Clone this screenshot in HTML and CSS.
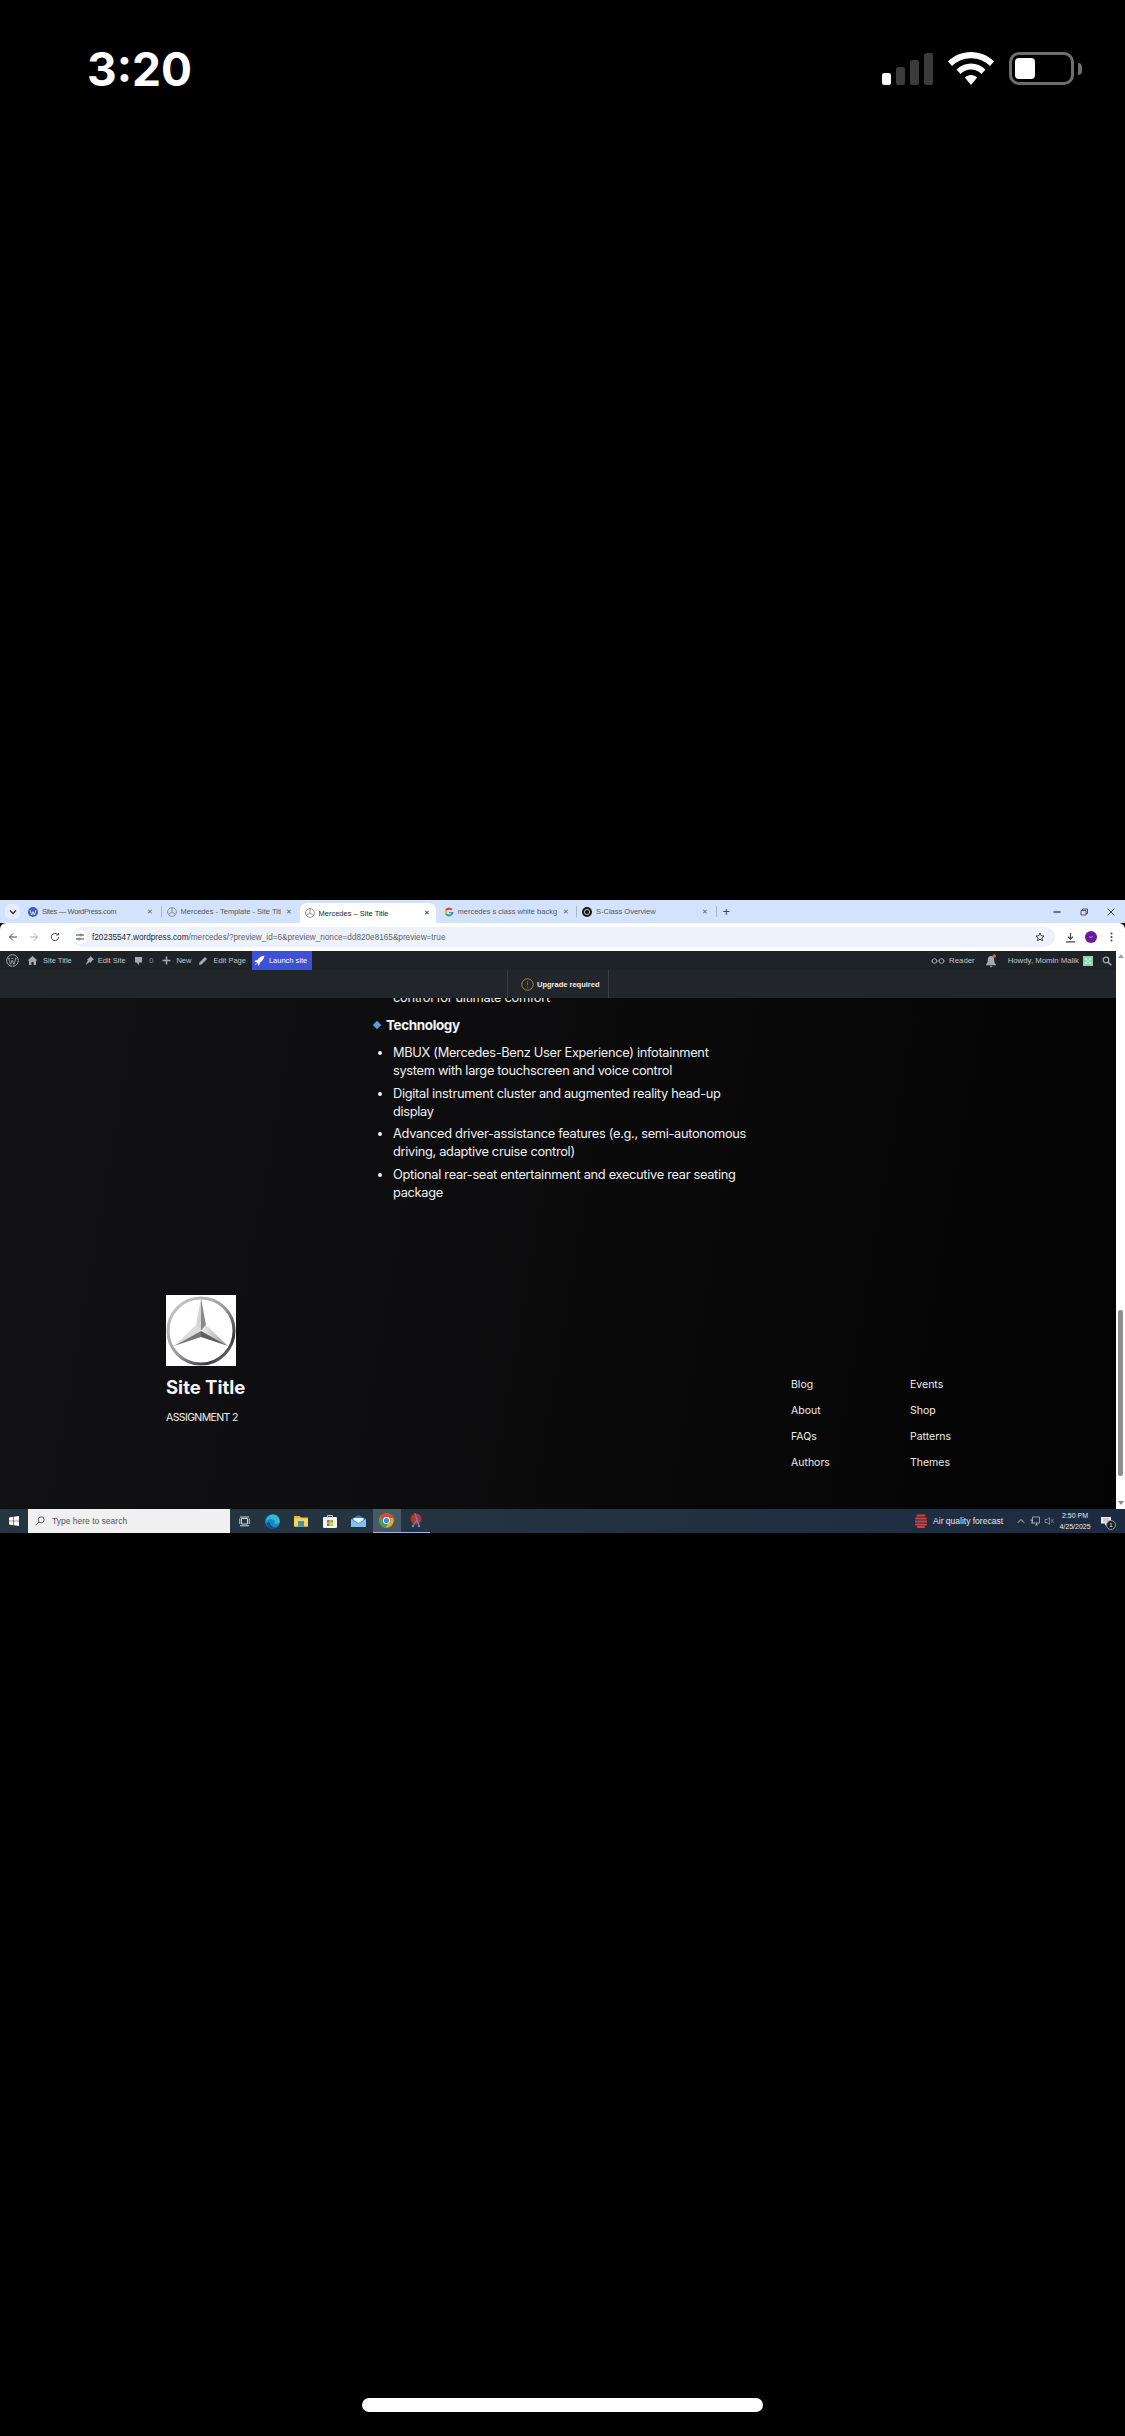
FILE: index.html
```html
<!DOCTYPE html>
<html lang="en">
<head>
  <meta charset="UTF-8" />
  <title>Mercedes – Site Title</title>
  <link rel="stylesheet" href="styles.css">
</head>
<body>
  <!-- phone status bar -->
  <div class="status">
    <div class="clock">3:20</div>
    <div class="status-icons">
      <div class="signal">
        <span class="bar b1 on"></span><span class="bar b2"></span><span class="bar b3"></span><span class="bar b4"></span>
      </div>
      <svg class="wifi" width="46" height="33" viewBox="0 0 46 33">
        <path d="M23 0C14 0 6 3.500 0 9.500L4 14C9 9 15.500 6.200 23 6.200S37 9 42 14L46 9.500C40 3.500 32 0 23 0Z" fill="#fff"/>
        <path d="M23 11.500C17.500 11.500 12.500 13.700 8.500 17.500L12.500 22C15.500 19.200 19 17.600 23 17.600S30.500 19.200 33.500 22L37.500 17.500C33.500 13.700 28.500 11.500 23 11.500Z" fill="#fff"/>
        <path d="M23 23C20.500 23 18.500 24 16.800 25.500L23 33L29.200 25.500C27.500 24 25.500 23 23 23Z" fill="#fff"/>
      </svg>
      <div class="battery"><div class="battery-fill"></div></div>
      <div class="battery-nub"></div>
    </div>
  </div>

  <!-- the desktop screenshot -->
  <div class="screen">
    <div class="tabstrip">
      <div class="tab-menu">
        <svg width="8" height="6" viewBox="0 0 8 6"><path d="M1 1.500L4 4.500L7 1.500" fill="none" stroke="#333" stroke-width="1.300"/></svg>
      </div>
      <div class="tab t1">
        <svg class="fav" width="10" height="10" viewBox="0 0 10 10"><circle cx="5" cy="5" r="5" fill="#3f5cc4"/><path d="M2 3L3.800 8L5 4.500L6.300 8L8 3" fill="none" stroke="#dfe6ff" stroke-width=".9"/></svg>
        <span class="tab-title">Sites — WordPress.com</span><span class="tab-x">✕</span>
      </div>
      <div class="tab-sep"></div>
      <div class="tab t2">
        <svg class="fav" width="10" height="10" viewBox="0 0 10 10"><circle cx="5" cy="5" r="4.400" fill="none" stroke="#777" stroke-width=".8"/><path d="M5 .8V5L1.500 7.300M5 5L8.500 7.300" fill="none" stroke="#777" stroke-width=".8"/></svg>
        <span class="tab-title">Mercedes - Template - Site Title</span><span class="tab-x">✕</span>
      </div>
      <div class="tab t3 active">
        <svg class="fav" width="10" height="10" viewBox="0 0 10 10"><circle cx="5" cy="5" r="4.400" fill="none" stroke="#777" stroke-width=".8"/><path d="M5 .8V5L1.500 7.300M5 5L8.500 7.300" fill="none" stroke="#777" stroke-width=".8"/></svg>
        <span class="tab-title">Mercedes – Site Title</span><span class="tab-x">✕</span>
      </div>
      <div class="tab t4">
        <svg class="fav" width="10" height="10" viewBox="0 0 10 10"><path d="M8.600 2.200A4.500 4.500 0 0 0 1.100 2.800L2.800 4A2.500 2.500 0 0 1 7 3.600Z" fill="#ea4335"/><path d="M1.100 2.800A4.500 4.500 0 0 0 1.200 7.300L2.800 6A2.500 2.500 0 0 1 2.800 4Z" fill="#fbbc05"/><path d="M1.200 7.300A4.500 4.500 0 0 0 8.300 8L6.800 6.800A2.500 2.500 0 0 1 2.800 6Z" fill="#34a853"/><path d="M9.500 5H5V6.200H7.500L6.800 6.800L8.300 8A4.500 4.500 0 0 0 9.500 5Z" fill="#4285f4"/></svg>
        <span class="tab-title">mercedes s class white backgro</span><span class="tab-x">✕</span>
      </div>
      <div class="tab-sep"></div>
      <div class="tab t5">
        <svg class="fav" width="10" height="10" viewBox="0 0 10 10"><circle cx="5" cy="5" r="5" fill="#1a1a1a"/><circle cx="5" cy="5" r="2.600" fill="none" stroke="#ccc" stroke-width=".9"/></svg>
        <span class="tab-title">S-Class Overview</span><span class="tab-x">✕</span>
      </div>
      <div class="tab-sep"></div>
      <div class="tab-new">+</div>
      <div class="win-controls">
        <svg width="10" height="10" viewBox="0 0 10 10"><path d="M1.500 5H8.500" stroke="#222" stroke-width="1.200"/></svg>
        <svg width="10" height="10" viewBox="0 0 10 10"><path d="M2 3.500H7V8H2ZM3.500 3.500V2H8.500V6.500H7" fill="none" stroke="#333" stroke-width=".8"/></svg>
        <svg width="10" height="10" viewBox="0 0 10 10"><path d="M1.500 1.500L8.500 8.500M8.500 1.500L1.500 8.500" stroke="#333" stroke-width=".9"/></svg>
      </div>
    </div>

    <div class="toolbar">
      <div class="nav-icons">
        <svg width="10" height="10" viewBox="0 0 10 10"><path d="M9 5H1.500M5 1.500L1.500 5L5 8.500" fill="none" stroke="#444" stroke-width="1"/></svg>
        <svg width="10" height="10" viewBox="0 0 10 10"><path d="M1 5H8.500M5 1.500L8.500 5L5 8.500" fill="none" stroke="#aaa" stroke-width="1"/></svg>
        <svg width="10" height="10" viewBox="0 0 10 10"><path d="M8.500 5A3.600 3.600 0 1 1 7.400 2.400M8.500 .8V3H6.300" fill="none" stroke="#444" stroke-width="1"/></svg>
      </div>
      <div class="omnibox">
        <div class="site-info">
          <svg width="8" height="8" viewBox="0 0 8 8"><path d="M0 2H4M6 2H8M0 6H2M4 6H8" stroke="#333" stroke-width=".9"/><circle cx="5" cy="2" r="1" fill="none" stroke="#333" stroke-width=".7"/><circle cx="3" cy="6" r="1" fill="none" stroke="#333" stroke-width=".7"/></svg>
        </div>
        <span class="url"><b>f20235547.wordpress.com</b>/mercedes/?preview_id=6&amp;preview_nonce=dd820e8165&amp;preview=true</span>
        <svg class="star" width="10" height="10" viewBox="0 0 10 10"><path d="M5 1L6.200 3.700L9 4L6.900 5.900L7.500 8.800L5 7.300L2.500 8.800L3.100 5.900L1 4L3.800 3.700Z" fill="none" stroke="#333" stroke-width=".9"/></svg>
      </div>
      <div class="tool-icons">
        <svg width="11" height="11" viewBox="0 0 11 11"><path d="M5.500 1V7M3 4.800L5.500 7.200L8 4.800M1 9.800H10" fill="none" stroke="#444" stroke-width="1.200"/></svg>
        <svg class="profile" width="12" height="12" viewBox="0 0 12 12"><circle cx="6" cy="6" r="6" fill="#6a1b9a"/><path d="M4 5.500Q6 7.500 8 5.500" fill="none" stroke="#c9a3e0" stroke-width=".8"/></svg>
        <svg class="dots" width="3" height="10" viewBox="0 0 3 10"><circle cx="1.500" cy="1.500" r="1" fill="#444"/><circle cx="1.500" cy="5" r="1" fill="#444"/><circle cx="1.500" cy="8.500" r="1" fill="#444"/></svg>
      </div>
    </div>

    <div class="viewport">
      <div class="site">
        <div class="adminbar">
          <div class="admin-left">
            <svg class="wp-logo" width="13" height="13" viewBox="0 0 13 13"><circle cx="6.500" cy="6.500" r="5.800" fill="none" stroke="#a7aaad" stroke-width="1"/><path d="M2.600 4.400L4.600 10.400L6.200 6L7.900 10.400L9.900 4.400M2 4.300H4.200M5.400 4.300H7.400M8.900 4.300H10.500" fill="none" stroke="#a7aaad" stroke-width=".9"/></svg>
            <div class="admin-item home">
              <svg width="11" height="11" viewBox="0 0 11 11"><path d="M5.500 1L.5 5.600H2V10H4.400V7H6.600V10H9V5.600H10.500Z" fill="#a7aaad"/></svg>
              <span>Site Title</span>
            </div>
            <div class="admin-item edit-site">
              <svg width="11" height="11" viewBox="0 0 11 11"><path d="M6.500 1L10 4.500L8.800 5L6.400 8L5.800 7L1.500 10L4 5.200L3 4.600L6 2.200Z" fill="#a7aaad"/></svg>
              <span>Edit Site</span>
            </div>
            <div class="admin-item comments">
              <svg width="9" height="10" viewBox="0 0 9 10"><path d="M1 1H8V6.500H5V9.500L2.800 6.500H1Z" fill="#a7aaad"/></svg>
              <span class="count">0</span>
            </div>
            <div class="admin-item new">
              <svg width="9" height="9" viewBox="0 0 9 9"><path d="M4.500 .5V8.500M.5 4.500H8.500" stroke="#a7aaad" stroke-width="1.500"/></svg>
              <span>New</span>
            </div>
            <div class="admin-item edit-page">
              <svg width="10" height="10" viewBox="0 0 10 10"><path d="M7 1L9 3L3.500 8.500L1 9L1.500 6.500Z" fill="#a7aaad"/></svg>
              <span>Edit Page</span>
            </div>
            <div class="launch">
              <svg width="11" height="11" viewBox="0 0 11 11"><path d="M10.500 .5C7.500 .8 5 2.400 3.400 5L1 5.600L.5 7L2.500 7.200L3.800 8.500L4 10.500L5.400 10L6 7.600C8.600 6 10.200 3.500 10.500 .5ZM2 8.200L.5 10.500L2.800 9Z" fill="#fff"/></svg>
              <span>Launch site</span>
            </div>
          </div>
          <div class="admin-right">
            <div class="admin-item reader">
              <svg width="14" height="6" viewBox="0 0 14 6"><circle cx="3.500" cy="3" r="2.300" fill="none" stroke="#c3c4c7" stroke-width=".8"/><circle cx="10.500" cy="3" r="2.300" fill="none" stroke="#c3c4c7" stroke-width=".8"/><path d="M5.800 3H8.200M1.200 3H0M12.800 3H14" stroke="#c3c4c7" stroke-width=".6"/></svg>
              <span>Reader</span>
            </div>
            <div class="bell">
              <svg width="12" height="14" viewBox="0 0 12 14"><path d="M6 2C3.800 2 2.800 3.600 2.800 5.500C2.800 8 2.300 9.200 1 10.400V11.200H11V10.400C9.700 9.200 9.200 8 9.200 5.500C9.200 3.600 8.200 2 6 2ZM4.500 12H7.500L6 13.500Z" fill="#a7aaad"/><circle cx="9.300" cy="2" r="1.800" fill="#d9605a"/></svg>
            </div>
            <span class="howdy">Howdy, Momin Malik</span>
            <svg class="gravatar" width="10" height="10" viewBox="0 0 10 10"><rect width="10" height="10" fill="#8fd3b0"/><path d="M2 2H4V4H2ZM6 2H8V4H6ZM4 4H6V6H4ZM2 6H4V8H2ZM6 6H8V8H6Z" fill="#c5ecd8"/></svg>
            <svg class="admin-search" width="10" height="10" viewBox="0 0 10 10"><circle cx="4" cy="4" r="2.800" fill="none" stroke="#a7aaad" stroke-width="1.300"/><path d="M6 6L9.300 9.300" stroke="#a7aaad" stroke-width="1.600"/></svg>
          </div>
        </div>
        <div class="upgrade-bar">
          <div class="upgrade">
            <svg width="13" height="13" viewBox="0 0 13 13"><circle cx="6.500" cy="6.500" r="5.700" fill="none" stroke="#b5842f" stroke-width="1"/><path d="M6.500 3.300V7.300M6.500 8.500V9.700" stroke="#77603a" stroke-width="1.100"/></svg>
            <span>Upgrade required</span>
          </div>
        </div>

        <div class="page">
          <div class="article">
            <p class="cut-line">control for ultimate comfort</p>
            <h3 class="section-title"><span class="diamond"></span>Technology</h3>
            <ul class="specs">
              <li>MBUX (Mercedes-Benz User Experience) infotainment system with large touchscreen and voice control</li>
              <li>Digital instrument cluster and augmented reality head-up display</li>
              <li>Advanced driver-assistance features (e.g., semi-autonomous driving, adaptive cruise control)</li>
              <li>Optional rear-seat entertainment and executive rear seating package</li>
            </ul>
          </div>
          <div class="footer">
            <div class="brand">
              <svg class="logo" width="70" height="71" viewBox="0 0 70 71">
                <defs>
                  <linearGradient id="ring" x1="0" y1="0" x2="1" y2="1">
                    <stop offset="0" stop-color="#cfcfcf"/><stop offset=".5" stop-color="#9a9a9a"/><stop offset=".8" stop-color="#3a3a3a"/><stop offset="1" stop-color="#a8a8a8"/>
                  </linearGradient>
                  <linearGradient id="blade" x1="0" y1="0" x2="1" y2="0">
                    <stop offset="0" stop-color="#f0f0f0"/><stop offset="1" stop-color="#9a9a9a"/>
                  </linearGradient>
                </defs>
                <rect width="70" height="71" fill="#fff"/>
                <circle cx="35" cy="36" r="33" fill="none" stroke="url(#ring)" stroke-width="3"/>
                <path d="M35 3L30 30L35 36Z" fill="#d4d4d4"/>
                <path d="M35 3L40 30L35 36Z" fill="#8a8a8a"/>
                <path d="M35 36L30 30L8 51Z" fill="#dcdcdc"/>
                <path d="M35 36L35 42L8 51Z" fill="#777"/>
                <path d="M35 36L40 30L62 51Z" fill="url(#blade)"/>
                <path d="M35 36L35 42L62 51Z" fill="#5f5f5f"/>
              </svg>
              <div class="brand-name">Site Title</div>
              <div class="brand-tag">ASSIGNMENT 2</div>
            </div>
            <div class="foot-nav">
              <div class="foot-col">
                <a>Blog</a><a>About</a><a>FAQs</a><a>Authors</a>
              </div>
              <div class="foot-col">
                <a>Events</a><a>Shop</a><a>Patterns</a><a>Themes</a>
              </div>
            </div>
          </div>
        </div>
      </div>
      <div class="scrollbar">
        <span class="arrow up"></span>
        <div class="thumb"></div>
        <span class="arrow down"></span>
      </div>
    </div>

    <div class="taskbar">
      <svg class="win-logo" width="10" height="10" viewBox="0 0 10 10"><path d="M0 1.400L4.300 .8V4.700H0ZM4.900 .7L10 0V4.700H4.900ZM0 5.300H4.300V9.200L0 8.600ZM4.900 5.300H10V10L4.900 9.300Z" fill="#fff"/></svg>
      <div class="searchbox">
        <svg width="10" height="10" viewBox="0 0 10 10"><circle cx="6.200" cy="3.800" r="3" fill="none" stroke="#333" stroke-width=".8"/><path d="M4 6L.8 9.200" stroke="#333" stroke-width=".9"/></svg>
        <span>Type here to search</span>
      </div>
      <div class="task-icons">
        <div class="task-icon">
          <svg width="11" height="11" viewBox="0 0 11 11"><path d="M2.500 2.500H8.500V8H2.500ZM1 1H10M1 9.800H10M.8 2.500V8M10.200 2.500V8" fill="none" stroke="#e6e6e6" stroke-width=".9"/></svg>
        </div>
        <div class="task-icon">
          <svg width="15" height="15" viewBox="0 0 15 15"><circle cx="7.500" cy="7.500" r="7.300" fill="#1687c9"/><path d="M.5 8C1.500 3 5 .5 8.500.5C12 .5 14.800 3.500 14.800 8C14.800 9.500 13 10 10.800 10C9 10 9.500 8 10 7.500C9 5 5 4 2.500 6C1.500 6.800 1 7.500.5 8Z" fill="#35b8c8"/><path d="M5 8.500C5 12 8.500 14 11.500 13.500C8 15.800 3 14.500 1.500 10.500C2 8.500 4 7 5 8.500Z" fill="#0c4f8f"/></svg>
        </div>
        <div class="task-icon">
          <svg width="14" height="12" viewBox="0 0 14 12"><path d="M0 1H5.500L7 2.500H14V11.500H0Z" fill="#e8b83f"/><rect y="3.500" width="14" height="8" fill="#f6d365"/><rect x="4" y="6" width="6" height="5.500" fill="#3f8fc8"/></svg>
        </div>
        <div class="task-icon">
          <svg width="14" height="14" viewBox="0 0 14 14"><rect y="3" width="14" height="11" rx="1" fill="#f4f4f4"/><path d="M4.500 4V1.500H9.500V4" fill="none" stroke="#cfcfcf" stroke-width="1"/><rect x="4" y="6" width="2.700" height="2.700" fill="#e2552b"/><rect x="7.300" y="6" width="2.700" height="2.700" fill="#7cb82f"/><rect x="4" y="9.300" width="2.700" height="2.700" fill="#1f9bd7"/><rect x="7.300" y="9.300" width="2.700" height="2.700" fill="#f3b51c"/></svg>
        </div>
        <div class="task-icon">
          <svg width="15" height="12" viewBox="0 0 15 12"><path d="M7.500 0L15 4V12H0V4Z" fill="#2d7fc4"/><path d="M0 4.200L7.500 8.500L15 4.200V12H0Z" fill="#7fc4ec"/><path d="M2.500 3H12.500V5L7.500 8L2.500 5Z" fill="#f2f6fa"/></svg>
        </div>
        <div class="task-icon open current">
          <svg width="15" height="15" viewBox="0 0 15 15"><circle cx="7.500" cy="7.500" r="7.300" fill="#e5a52b"/><path d="M7.500.2A7.300 7.300 0 0 0 1.100 4L4 9L5 5H14.300A7.300 7.300 0 0 0 7.500.2Z" fill="#d8473b"/><path d="M1.100 4A7.300 7.300 0 0 0 6.500 14.700L9.300 10H5Z" fill="#3ba55c"/><circle cx="7.500" cy="7.500" r="3.400" fill="#fff"/><circle cx="7.500" cy="7.500" r="2.600" fill="#4287e8"/></svg>
        </div>
        <div class="task-icon open">
          <svg width="13" height="15" viewBox="0 0 13 15"><circle cx="7" cy="6" r="5.500" fill="#b3352b"/><path d="M6 0L8 7L4 13M8 7L10 13" fill="none" stroke="#5b8bc9" stroke-width="1.200"/><circle cx="4" cy="13" r="1.300" fill="#5b8bc9"/><circle cx="10" cy="13" r="1.300" fill="#5b8bc9"/></svg>
        </div>
      </div>
      <div class="tray">
        <svg class="air" width="12" height="14" viewBox="0 0 12 14"><path d="M2.500 1.500H9.500M1 4.500H11M.5 7.500H11.500M1 10.500H11M3 13H9" fill="none" stroke="#d1433a" stroke-width="2" stroke-linecap="round"/></svg>
        <span class="air-text">Air quality forecast</span>
        <svg class="caret" width="8" height="6" viewBox="0 0 8 6"><path d="M.8 4.800L4 1.500L7.200 4.800" fill="none" stroke="#ddd" stroke-width=".9"/></svg>
        <svg class="net" width="10" height="10" viewBox="0 0 10 10"><path d="M2.500 1H9.500V7H2.500ZM5 9H8M6.500 7V9M0 4H2V8" fill="none" stroke="#ccc" stroke-width=".7"/></svg>
        <svg class="vol" width="10" height="10" viewBox="0 0 10 10"><path d="M1 3.500H3L5.500 1.500V8.500L3 6.500H1Z" fill="none" stroke="#aaa" stroke-width=".7"/><path d="M7 3L9.500 7M9.500 3L7 7" stroke="#999" stroke-width=".6"/></svg>
        <div class="clock-small"><span>2:50 PM</span><span>4/25/2025</span></div>
        <div class="notify">
          <svg width="10" height="9" viewBox="0 0 10 9"><path d="M0 0H10V6.500H6L4 9V6.500H0Z" fill="#eee"/><path d="M2 2H8M2 4H8" stroke="#777" stroke-width=".6"/></svg>
          <span class="notify-count">1</span>
        </div>
      </div>
    </div>
  </div>

  <div class="home-bar"><div class="home-pill"></div></div>
</body>
</html>
```

FILE: styles.css
```css
* {
  box-sizing: border-box;
}
html, body {
  margin: 0;
  height: 2436px;
  background-color: #000000;
}
body {
  font-family: Inter, "Liberation Sans", sans-serif;
  display: flex;
  flex-direction: column;
  overflow: hidden;
}

/* phone chrome */
.status {
  height: 900px;
  display: flex;
  justify-content: space-between;
  align-items: flex-start;
  padding: 46px 43px 0 87px;
}
.clock {
  color: #ffffff;
  font-size: 46px;
  line-height: 46px;
  font-weight: 700;
}
.status-icons {
  display: flex;
  align-items: center;
  margin-top: 6px;
}
.signal {
  display: flex;
  align-items: flex-end;
  gap: 5px;
  height: 33px;
  margin-right: 15px;
}
.bar {
  width: 9px;
  border-radius: 2.500px;
  background-color: #3b3b3b;
}
.bar.on { background-color: #ffffff; }
.b1 { height: 12px; }
.b2 { height: 18px; }
.b3 { height: 25px; }
.b4 { height: 32px; }
.battery {
  width: 65px;
  height: 33px;
  margin-left: 15px;
  padding: 3px;
  border: 3px solid #6e6e6e;
  border-radius: 10px;
}
.battery-fill {
  width: 20px;
  height: 100%;
  border-radius: 4px;
  background-color: #ffffff;
}
.battery-nub {
  width: 4px;
  height: 12px;
  margin-left: 4px;
  border-radius: 0 6px 6px 0;
  background-color: #6e6e6e;
}
.home-bar {
  flex: 1;
  display: flex;
  justify-content: center;
  align-items: flex-end;
  padding-bottom: 24px;
}
.home-pill {
  width: 401px;
  height: 14px;
  border-radius: 7px;
  background-color: #ffffff;
}

/* screenshot */
.screen {
  height: 633px;
  display: flex;
  flex-direction: column;
}
.tabstrip {
  height: 23px;
  display: flex;
  align-items: center;
  background-color: #d3e3fd;
  font-family: "Liberation Sans", sans-serif;
  font-size: 7.500px;
  color: #55585a;
}
.tab-menu {
  width: 15px;
  height: 15px;
  margin: 0 4px 0 5px;
  border-radius: 5px;
  display: flex;
  align-items: center;
  justify-content: center;
  background-color: #e6eefc;
}
.tab {
  height: 23px;
  flex: none;
  display: flex;
  align-items: center;
  padding: 0 6px 0 5px;
  gap: 4px;
}
.tab-title {
  flex: 1;
  white-space: nowrap;
  overflow: hidden;
}
.tab-x {
  font-size: 7px;
  width: 9px;
  text-align: center;
}
.fav { flex: none; }
.t1 { width: 136.500px; padding-left: 4px; }
.t1 .tab-title { letter-spacing: -0.35px; }
.t2 { width: 138px; }
.t3 { width: 136px; padding-right: 4.500px; }
.t4 { width: 140.500px; padding-left: 8px; }
.t5 { width: 138.500px; }
.active {
  background-color: #ffffff;
  color: #1f1f1f;
  border-radius: 7px 7px 0 0;
  margin-top: 3px;
  height: 20px;
}
.tab-sep {
  width: 1px;
  height: 11px;
  background-color: #a9b6cc;
}
.tab-new {
  font-size: 13px;
  margin-left: 6px;
  color: #444746;
}
.win-controls {
  margin-left: auto;
  padding-right: 9px;
  display: flex;
  gap: 17px;
}
.toolbar {
  height: 28px;
  display: flex;
  align-items: center;
  background-color: #ffffff;
  border-radius: 6px 6px 0 0;
}
.nav-icons {
  width: 72px;
  padding-left: 8px;
  display: flex;
  gap: 11px;
}
.omnibox {
  width: 983px;
  height: 20px;
  display: flex;
  align-items: center;
  border-radius: 10px;
  padding: 0 10px 0 1px;
  background-color: #edf2fa;
  font-family: "Liberation Sans", sans-serif;
  font-size: 8.200px;
  color: #5f6368;
}
.site-info {
  width: 14px;
  height: 14px;
  margin-right: 5px;
  border-radius: 50%;
  display: flex;
  align-items: center;
  justify-content: center;
  background-color: #ffffff;
}
.url b {
  font-weight: 400;
  color: #1f1f1f;
}
.star { margin-left: auto; }
.tool-icons {
  flex: 1;
  display: flex;
  align-items: center;
  padding-left: 9.500px;
}
.profile { margin-left: 9.500px; }
.dots { margin-left: 13px; }
.viewport {
  height: 558px;
  display: flex;
}
.site {
  width: 1116px;
  display: flex;
  flex-direction: column;
}
.adminbar {
  height: 19px;
  flex: none;
  display: flex;
  justify-content: space-between;
  align-items: center;
  background-color: #1d2327;
  color: #c3c4c7;
  font-family: "Liberation Sans", sans-serif;
  font-size: 7.500px;
}
.admin-left, .admin-right {
  display: flex;
  align-items: center;
  height: 100%;
}
.admin-right { font-size: 7.800px; }
.admin-item {
  display: flex;
  align-items: center;
  gap: 5px;
}
.wp-logo { margin: 0 8px 0 6px; }
.edit-site { margin-left: 12px; gap: 3px; }
.comments { margin-left: 8.500px; gap: 6px; }
.count { color: #8c8f94; }
.new { margin-left: 9px; }
.edit-page { margin-left: 7px; }
.launch {
  height: 100%;
  margin-left: 6px;
  padding: 0 5px 0 2.500px;
  display: flex;
  align-items: center;
  gap: 3.500px;
  background-color: #3d50d6;
  color: #ffffff;
}
.reader { gap: 4px; }
.bell { margin: 0 11px 0 10px; display: flex; }
.gravatar { margin: 0 9px 0 4px; }
.admin-search { margin-right: 4px; }
.upgrade-bar {
  height: 28px;
  flex: none;
  display: flex;
  padding-left: 507px;
  background-color: #22252a;
}
.upgrade {
  width: 102px;
  display: flex;
  align-items: center;
  padding-left: 13px;
  gap: 3px;
  border-left: 1px solid #3a3d42;
  border-right: 1px solid #3a3d42;
  color: #f0f0f0;
  font-family: "Liberation Sans", sans-serif;
  font-size: 7.500px;
  font-weight: 700;
}
.page {
  flex: 1;
  overflow: hidden;
  background: linear-gradient(100deg, #121214 0%, #0e0e10 35%, #070707 70%, #030303 100%);
  color: #f0f0f0;
}
.article {
  margin-left: 373px;
  width: 378px;
}
.cut-line {
  margin: -9px 0 0 20px;
  font-size: 12.800px;
  line-height: 18px;
  letter-spacing: -0.3px;
}
.section-title {
  margin: 9px 0 0;
  display: flex;
  align-items: center;
  font-size: 13.500px;
  line-height: 18px;
  font-weight: 700;
  letter-spacing: -0.4px;
  color: #f4f4f4;
}
.diamond {
  width: 6px;
  height: 6px;
  margin: 0 6px 0 1px;
  transform: rotate(45deg);
  background-color: #5a9bdc;
}
.specs {
  margin: 10px 0 0;
  padding: 0 0 0 20px;
  font-size: 12.800px;
  line-height: 18px;
  letter-spacing: -0.3px;
}
.specs li { margin-bottom: 4.700px; }
.footer {
  margin-top: 93px;
  display: flex;
  justify-content: space-between;
  padding: 0 0 0 166px;
}
.logo { display: block; }
.brand-name {
  margin-top: 9px;
  font-size: 18.500px;
  line-height: 24px;
  font-weight: 700;
  color: #f6f6f6;
}
.brand-tag {
  margin-top: 11.500px;
  font-size: 10.500px;
  line-height: 14px;
  letter-spacing: -0.6px;
}
.foot-nav {
  display: flex;
  margin: 83px 0 0;
  width: 325px;
}
.foot-col {
  width: 119px;
  display: flex;
  flex-direction: column;
  gap: 12px;
  font-size: 10.500px;
  line-height: 14px;
  color: #ececec;
}
.scrollbar {
  width: 9px;
  display: flex;
  flex-direction: column;
  align-items: center;
  background-color: #ffffff;
}
.arrow {
  width: 0;
  height: 0;
  border-left: 3px solid transparent;
  border-right: 3px solid transparent;
}
.arrow.up {
  margin-top: 3px;
  border-bottom: 4px solid #a3a3a3;
}
.arrow.down {
  margin-top: 25px;
  border-top: 4px solid #8a8a8a;
}
.thumb {
  width: 5px;
  height: 166px;
  margin-top: 352px;
  border-radius: 2px;
  background-color: #8e8e8e;
}
.taskbar {
  height: 24px;
  flex: none;
  display: flex;
  align-items: center;
  background: linear-gradient(90deg, #263640 0%, #243340 40%, #1c2b42 100%);
  color: #e8e8e8;
  font-family: "Liberation Sans", sans-serif;
  font-size: 8.500px;
}
.win-logo { margin: 0 9px 0 9px; }
.searchbox {
  width: 202px;
  height: 24px;
  display: flex;
  align-items: center;
  gap: 7px;
  padding-left: 7px;
  background-color: #f0f0f0;
  color: #555555;
}
.task-icons {
  display: flex;
  height: 100%;
}
.task-icon {
  width: 28.500px;
  height: 24px;
  display: flex;
  align-items: center;
  justify-content: center;
}
.task-icons .open { border-bottom: 1px solid #9ab8dc; }
.current { background-color: #4a5a64; }
.tray {
  margin-left: auto;
  display: flex;
  align-items: center;
  height: 100%;
}
.air { margin-right: 6px; }
.air-text { margin-right: 14px; }
.caret { margin-right: 5px; }
.net { margin-right: 4px; }
.vol { margin-right: 3px; }
.clock-small {
  display: flex;
  flex-direction: column;
  align-items: center;
  width: 36px;
  font-size: 7px;
  line-height: 11px;
}
.notify {
  position: relative;
  width: 22px;
  margin-left: 2px;
  margin-right: 8px;
  display: flex;
  justify-content: center;
}
.notify-count {
  position: absolute;
  right: 1px;
  top: 3px;
  width: 10px;
  height: 10px;
  border-radius: 50%;
  border: 1px solid #999999;
  background-color: #222222;
  font-size: 6px;
  line-height: 8px;
  text-align: center;
}
```
